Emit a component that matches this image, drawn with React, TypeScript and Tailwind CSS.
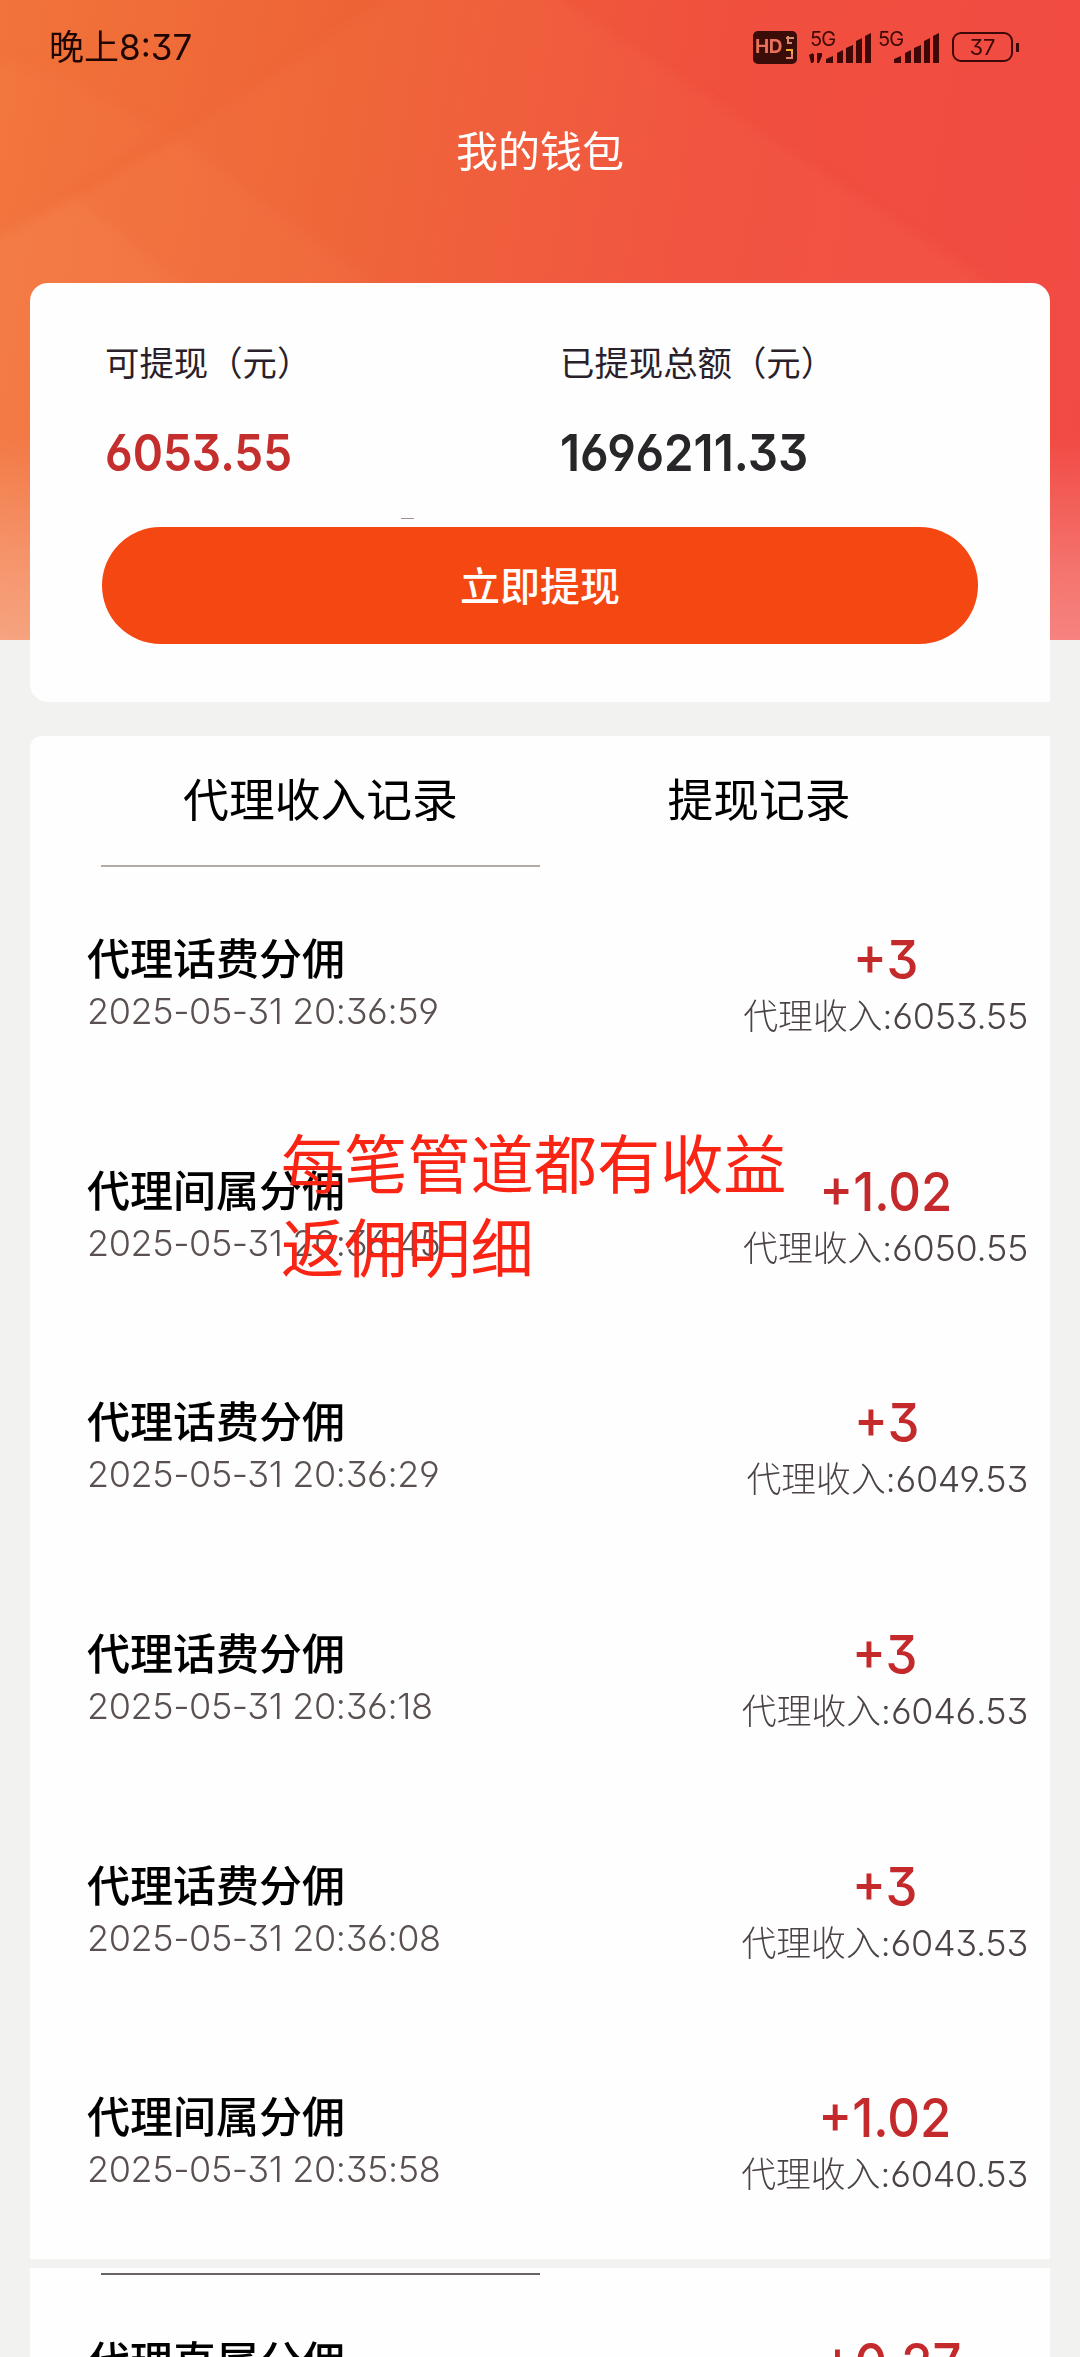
const records = [
  { title: '代理话费分佣', time: '2025-05-31 20:36:59', amount: '+3', balance: '6053.55' },
  { title: '代理间属分佣', time: '2025-05-31 20:36:45', amount: '+1.02', balance: '6050.55' },
  { title: '代理话费分佣', time: '2025-05-31 20:36:29', amount: '+3', balance: '6049.53' },
  { title: '代理话费分佣', time: '2025-05-31 20:36:18', amount: '+3', balance: '6046.53' },
  { title: '代理话费分佣', time: '2025-05-31 20:36:08', amount: '+3', balance: '6043.53' },
  { title: '代理间属分佣', time: '2025-05-31 20:35:58', amount: '+1.02', balance: '6040.53' },
];

const nextRecord = { title: '代理直属分佣', time: '2025-05-31 20:35:49', amount: '+0.27', balance: '6039.51' };

type RecordItem = (typeof records)[number];

function Signal({ extraBars = false }: { extraBars?: boolean }) {
  return (
    <div className="relative h-[31px] w-[62px]">
      <svg width="62" height="31" viewBox="0 0 62 31" fill="#3d0806">
        {extraBars && <path d="M0 23l4-2v10h-2zM4 22h1v8h-1zM8 21h5v3l-3 7h-2z" />}
        <path d="M17 27l7-3v7h-7zM28 21l6-3v13h-6zM37 16l7-3v18h-7zM47 9l6-3v25h-6zM56 4l6-3v30h-6z" />
      </svg>
      <span className="absolute top-[-3px] left-px text-[20px] leading-[20px] tracking-[-0.8px] text-[#3d0806]">5G</span>
    </div>
  );
}

function StatusBar() {
  return (
    <div className="flex h-[94px] items-center justify-between pr-[61px] pl-[49px]">
      <span className="text-[35px] leading-[40px] text-[#1f0603]">晚上8:37</span>
      <div className="flex items-center text-[#3d0806]">
        <div className="flex h-[33px] w-[44px] items-center rounded-[5px] bg-[#3a0d08] pl-[2px]">
          <span className="text-[19px] font-bold tracking-[-0.4px] text-[#e8705c]">HD</span>
          <svg className="ml-[2px]" width="11" height="27" viewBox="0 0 11 27" fill="none" strokeWidth="2">
            <path d="M2 4h7M4 2v7h4M9 3v2" stroke="#d98a6c" />
            <path d="M2 16h6v4" stroke="#f0a83c" />
            <path d="M8 20v4H2" stroke="#e8806a" />
          </svg>
        </div>
        <div className="ml-[12px] flex gap-[6px]">
          <Signal extraBars />
          <Signal />
        </div>
        <div className="ml-[13px] flex h-[30px] w-[61px] items-center justify-center rounded-[9px] border-[2.5px] border-[#3d0806]">
          <span className="text-[22px]">37</span>
        </div>
        <div className="ml-[3px] h-[9px] w-[3px] bg-[#3d0806]" />
      </div>
    </div>
  );
}

// faceted light shapes over the header gradient, fading out at the bottom
function HeaderBackground() {
  return (
    <svg className="absolute inset-0" width="1080" height="640" viewBox="0 0 1080 640" fill="#ff9a6e">
      <defs>
        <linearGradient id="fade" x1="0" y1="0" x2="0" y2="1">
          <stop offset="0.68" stopColor="#fff" stopOpacity="0" />
          <stop offset="0.9" stopColor="#fff" stopOpacity="0.24" />
          <stop offset="1" stopColor="#fff" stopOpacity="0.32" />
        </linearGradient>
        <filter id="soft">
          <feGaussianBlur stdDeviation="6" />
        </filter>
      </defs>
      <g filter="url(#soft)">
        <path d="M-20 50L60 75L165 130L-20 245z" opacity="0.08" />
        <path d="M-20 245L75 197L190 290V660H-20z" opacity="0.24" />
        <path d="M75 197L178 138L380 290H190z" opacity="0.15" />
        <path d="M178 138L400 -10H545L1000 290H380z" opacity="0.08" />
      </g>
      <rect width="1080" height="640" fill="url(#fade)" />
    </svg>
  );
}

function RecordRow({ item }: { item: RecordItem }) {
  return (
    <li className="flex h-[231.7px] items-start justify-between pr-[22px] pl-[57px]">
      <div>
        <p className="text-[43px] leading-[52px] font-medium text-black">{item.title}</p>
        <p className="text-[36px] leading-[52px] font-light tracking-[-0.4px] text-[#5a5050]">{item.time}</p>
      </div>
      <div className="flex flex-col items-center">
        <p className="-mt-px scale-x-[0.94] text-[54px] leading-[56px] font-medium text-[#c42a2b]">{item.amount}</p>
        <p className="mt-[2px] text-[34.8px] leading-[52px] font-light text-[#4c4444]">
          代理收入:<span className="text-[36px] tracking-[-0.3px]">{item.balance}</span>
        </p>
      </div>
    </li>
  );
}

export default function App() {
  return (
    <div className="relative h-[2357px] w-[1080px] overflow-hidden bg-[#f2f2f1] font-['Inter','Noto_Sans_CJK_SC',sans-serif] [font-feature-settings:'cv03','cv04','cv09']">
      <header className="relative h-[640px] bg-[linear-gradient(100deg,#f1743a_0%,#ee6336_30%,#f04f3e_62%,#f24a44_100%)]">
        <HeaderBackground />
        <div className="relative">
          <StatusBar />
          <h1 className="pt-[33px] text-center text-[42px] leading-[50px] text-white">我的钱包</h1>
        </div>
      </header>

      <main className="relative -mt-[357px] px-[30px]">
        <section className="relative h-[419px] rounded-[18px] rounded-br-none bg-[#fefefe] px-[72px] pt-[55px]">
          <div className="flex pl-[3px]">
            <div className="w-[455px]">
              <p className="text-[34.4px] leading-[52px] text-[#2a1f2a]">可提现（元）</p>
              <p className="mt-[33px] origin-left scale-x-[0.9] text-[51px] leading-[60px] font-semibold text-[#c42f2e]">
                6053.55
              </p>
            </div>
            <div>
              <p className="text-[34.4px] leading-[52px] text-[#2a1f2a]">已提现总额（元）</p>
              <p className="mt-[33px] origin-left scale-x-[0.93] text-[51px] leading-[60px] font-semibold text-[#282629]">
                1696211.33
              </p>
            </div>
          </div>
          <span className="absolute top-[235px] left-[371px] h-px w-[13px] bg-[#a58a9c]" />
          <button className="mt-[44px] h-[117px] w-full rounded-full bg-[#f54712] pt-[3px] text-[40px] font-medium text-white">
            立即提现
          </button>
        </section>

        <section className="mt-[34px] h-[1523px] rounded-tl-[12px] bg-[#fefefe]">
          <div className="flex h-[131px] text-[45.8px] text-black">
            <div className="ml-[71px] flex w-[439px] items-center justify-center border-b-2 border-[#b3aaa6] pt-[2px]">
              代理收入记录
            </div>
            <div className="flex w-[438px] items-center justify-center">提现记录</div>
          </div>
          <ul className="pt-[66px]">
            {records.map((item) => (
              <RecordRow key={item.time} item={item} />
            ))}
          </ul>
        </section>

        <section className="mt-[9px] bg-[#fefefe]">
          <div className="ml-[71px] h-[7px] w-[439px] border-b-2 border-[#6a6464]" />
          <ul className="pt-[61px]">
            <RecordRow item={nextRecord} />
          </ul>
        </section>
      </main>

      <p className="absolute top-[1124px] left-[281px] text-[63.2px] leading-[83.5px] text-[#fa2414]">
        每笔管道都有收益
        <br />
        返佣明细
      </p>
    </div>
  );
}
